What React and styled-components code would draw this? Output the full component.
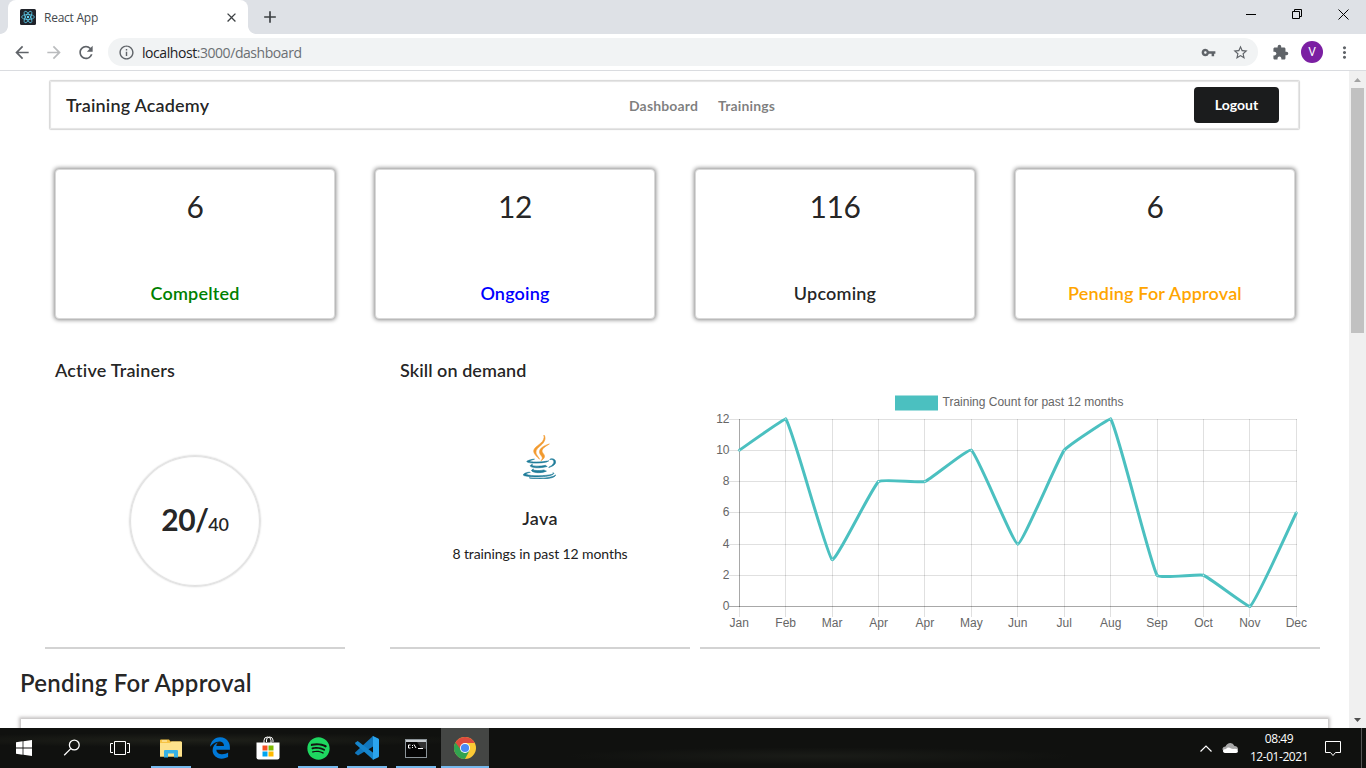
import React from "react";
import styled, { createGlobalStyle } from "styled-components";
import {
  MdArrowBack, MdArrowForward, MdRefresh, MdInfoOutline, MdVpnKey,
  MdStarBorder, MdExtension, MdMoreVert, MdClose, MdAdd,
} from "react-icons/md";
import { FaEdgeLegacy, FaSpotify } from "react-icons/fa6";

const Global = createGlobalStyle`
  * { box-sizing: border-box; }
  body { margin: 0; overflow: hidden; background: #fff; font-family: Lato, "Liberation Sans", sans-serif; font-variant-ligatures: none; color: rgba(0,0,0,.87); }
`;

const Screen = styled.div`
  width: 1366px;
  height: 768px;
  display: flex;
  flex-direction: column;
  overflow: hidden;
`;

/* ---------- browser ---------- */
const TabStrip = styled.div`
  height: 34px;
  flex: none;
  display: flex;
  background: #dee1e6;
`;
const Tab = styled.div`
  width: 240px;
  height: 34px;
  display: flex;
  align-items: center;
  padding: 0 9px 0 12px;
  background: #fff;
  border-radius: 8px 8px 0 0;
  font: 12px "Open Sans", sans-serif;
  letter-spacing: -0.25px;
  color: #45494d;
  svg { flex: none; }
`;
const TabFoot = styled.div`
  width: 8px;
  height: 8px;
  align-self: flex-end;
  background: radial-gradient(circle at ${(p) => p.$corner} 0, #dee1e6 7.5px, #fff 8.2px);
`;
const TabTitle = styled.span`
  flex: 1;
  margin-left: 8px;
`;
const NewTab = styled.div`
  display: flex;
  align-items: center;
  padding-left: 4px;
  color: #3c4043;
`;
const WindowButtons = styled.div`
  margin-left: auto;
  display: flex;
  height: 29px;
`;
const WindowButton = styled.div`
  width: 46px;
  display: flex;
  align-items: center;
  justify-content: center;
`;
const Toolbar = styled.div`
  height: 37px;
  flex: none;
  display: flex;
  align-items: center;
  padding: 0 12px 0 12px;
  background: #fff;
  border-bottom: 1px solid #dadce0;
  color: #5f6368;
`;
const ToolIcon = styled.div`
  width: 20px;
  height: 20px;
  display: flex;
  align-items: center;
  justify-content: center;
  margin-right: ${(p) => p.$gap ?? 12}px;
  color: ${(p) => p.$color || "#5f6368"};
`;
const AddressBar = styled.div`
  width: 1150px;
  height: 28px;
  display: flex;
  align-items: center;
  padding: 0 8px;
  margin-right: 12px;
  border-radius: 14px;
  background: #f1f3f4;
`;
const Url = styled.span`
  flex: 1;
  font: 14px "Open Sans", sans-serif;
  letter-spacing: -0.44px;
  color: #6b6f73;
  b { font-weight: 400; color: #202124; }
`;
const Avatar = styled.div`
  width: 22px;
  height: 22px;
  margin-right: 11px;
  display: flex;
  align-items: center;
  justify-content: center;
  border-radius: 50%;
  background: #7b1fa2;
  color: #fff;
  font: 12px Roboto, sans-serif;
`;

/* ---------- page ---------- */
const Viewport = styled.div`
  flex: 1;
  min-height: 0;
  display: flex;
`;
const Page = styled.main`
  width: 1349px;
  overflow: hidden;
  background: #fff;
`;
const ScrollTrack = styled.div`
  width: 17px;
  display: flex;
  flex-direction: column;
  align-items: center;
  justify-content: space-between;
  background: #f0f0f0;
`;
const ScrollArrow = styled.div`
  height: 17px;
  display: flex;
  align-items: center;
`;
const ScrollThumb = styled.div`
  width: 13px;
  height: 245px;
  margin-bottom: auto;
  background: #c1c1c1;
`;
const NavBar = styled.nav`
  width: 1249px;
  height: 48px;
  margin: 10px 0 0 50px;
  padding: 0 20px 0 16px;
  display: flex;
  align-items: center;
  border-radius: 1px;
  box-shadow: 0 0 1px 1px #d6d6d6, inset 0 0 1px 1px #e4e4e4;
`;
const Brand = styled.div`
  width: 563px;
  font-size: 18px;
  font-weight: 600;
  line-height: 20px;
  letter-spacing: 0.18px;
`;
const NavLinks = styled.div`
  display: flex;
  gap: 20px;
`;
const NavLink = styled.a`
  font-size: 14px;
  font-weight: 700;
  letter-spacing: 0.15px;
  color: rgba(0, 0, 0, 0.52);
`;
const LogoutButton = styled.button`
  margin-left: auto;
  width: 85px;
  height: 36px;
  border: 0;
  border-radius: 4px;
  background: #1b1c1d;
  color: #fff;
  padding: 0 0 2px;
  font: 700 14px Lato, sans-serif;
`;
const StatRow = styled.section`
  display: flex;
  gap: 40px;
  margin: 40px 0 0 55px;
`;
const StatCard = styled.article`
  width: 280px;
  height: 150px;
  padding: 16px 0 13px;
  display: flex;
  flex-direction: column;
  align-items: center;
  justify-content: space-between;
  border: 1px solid #d8d8d8;
  border-radius: 4px;
  box-shadow: 0 0 4px 0.5px rgba(0, 0, 0, 0.46);
  background: #fff;
`;
const StatValue = styled.div`
  font-size: 30px;
  line-height: 40px;
  letter-spacing: -0.4px;
`;
const StatLabel = styled.div`
  font-size: 18px;
  line-height: 24px;
  font-weight: 600;
  letter-spacing: 0.18px;
  color: ${(p) => p.$color};
`;
const PanelRow = styled.section`
  display: flex;
  margin: 30px 0 0 45px;
`;
const Panel = styled.article`
  width: ${(p) => p.$width}px;
  height: 300px;
  margin-right: ${(p) => p.$gap || 0}px;
  border-bottom: 2px solid #d3d3d3;
  display: flex;
  flex-direction: column;
  align-items: center;
`;
const PanelTitle = styled.h3`
  align-self: flex-start;
  margin: 10px 0 0 10px;
  font-size: 18px;
  line-height: 23px;
  font-weight: 600;
  letter-spacing: ${(p) => p.$spacing}px;
`;
const Ring = styled.div`
  width: 130px;
  height: 130px;
  margin-top: 74px;
  display: flex;
  align-items: baseline;
  justify-content: center;
  border-radius: 50%;
  box-shadow: 0 0 2px 0.5px #c8c8c8, inset 0 0 1px 1px #dedede;
  line-height: 126px;
  font-size: 18px;
  font-weight: 600;
  letter-spacing: -0.3px;
  b { font-size: 30px; font-weight: 700; letter-spacing: -0.6px; }
`;
const JavaLogo = styled.svg`
  width: 33px;
  height: 44px;
  margin: 53px 1px 0 0;
`;
const SkillName = styled.div`
  margin-top: 27px;
  font-size: 18px;
  line-height: 24px;
  font-weight: 600;
  letter-spacing: 0.3px;
`;
const SkillNote = styled.p`
  margin: 14px 0 0;
  font-size: 14px;
  line-height: 20px;
  letter-spacing: -0.1px;
  color: #212121;
`;
const Chart = styled.svg`
  width: 620px;
  height: 298px;
  display: block;
  text { font: 12px "Liberation Sans", Arial, sans-serif; fill: #666; }
`;
const SectionTitle = styled.h2`
  margin: 18px 0 0 20px;
  font-size: 24px;
  line-height: 31px;
  font-weight: 600;
  letter-spacing: 0.24px;
`;
const TableCard = styled.section`
  width: 1307px;
  height: 80px;
  margin: 21px 0 0 21px;
  box-shadow: 0 0 3px 2px rgba(90, 80, 80, 0.36);
  background: #fff;
`;

/* ---------- taskbar ---------- */
const Taskbar = styled.footer`
  height: 40px;
  flex: none;
  display: flex;
  background:
    radial-gradient(ellipse at 14% 30%, rgba(42, 44, 34, 0.55), transparent 18%),
    radial-gradient(ellipse at 60% 70%, rgba(36, 38, 32, 0.5), transparent 22%),
    #10110f;
`;
const TaskItem = styled.div`
  width: ${(p) => p.$width || 48}px;
  height: 40px;
  margin-right: ${(p) => p.$gap || 0}px;
  display: flex;
  align-items: center;
  justify-content: center;
  background: ${(p) => (p.$active ? "#444644" : "transparent")};
  box-shadow: ${(p) => (p.$open ? "inset 0 -2px #76b9ed" : "none")};
`;
const Tray = styled.div`
  margin-left: auto;
  display: flex;
  align-items: center;
  border-right: 1px solid #555;
  padding-right: 19px;
  margin-right: 4px;
`;
const Clock = styled.div`
  width: 62px;
  margin: 0 15px 0 0;
  text-align: center;
  color: #fff;
  font: 12px/18px "Open Sans", sans-serif;
  letter-spacing: -0.45px;
`;

const stats = [
  { value: 6, label: "Compelted", color: "green" },
  { value: 12, label: "Ongoing", color: "blue" },
  { value: 116, label: "Upcoming", color: "rgba(0,0,0,.87)" },
  { value: 6, label: "Pending For Approval", color: "orange" },
];

const months = ["Jan", "Feb", "Mar", "Apr", "Apr", "May", "Jun", "Jul", "Aug", "Sep", "Oct", "Nov", "Dec"];
const counts = [10, 12, 3, 8, 8, 10, 4, 10, 12, 2, 2, 0, 6];
const LEFT = 39.3, TOP = 70, PLOT_W = 557, PLOT_H = 187.5;
const xAt = (i) => LEFT + (i * PLOT_W) / 12;
const yAt = (v) => TOP + PLOT_H - (v * PLOT_H) / 12;
const snap = (n) => Math.floor(n) + 0.5;

function smoothPath(points, tension) {
  const clampY = (y) => Math.min(TOP + PLOT_H, Math.max(TOP, y));
  const controls = points.map((p, i) => {
    const prev = points[i - 1] || p;
    const next = points[i + 1] || p;
    const d1 = Math.hypot(p[0] - prev[0], p[1] - prev[1]);
    const d2 = Math.hypot(next[0] - p[0], next[1] - p[1]);
    const a = (tension * d1) / (d1 + d2);
    const b = (tension * d2) / (d1 + d2);
    const dx = next[0] - prev[0], dy = next[1] - prev[1];
    return [[p[0] - a * dx, clampY(p[1] - a * dy)], [p[0] + b * dx, clampY(p[1] + b * dy)]];
  });
  return points
    .map((p, i) => (i ? `C${controls[i - 1][1]} ${controls[i][0]} ${p}` : `M${p}`))
    .join(" ");
}

function TrainingChart() {
  const points = counts.map((v, i) => [xAt(i), yAt(v)]);
  return (
    <Chart viewBox="0 0 620 298">
      <rect x="195" y="46.5" width="43" height="15" fill="#4bc0c0" />
      <text x="242.5" y="57">Training Count for past 12 months</text>
      {[0, 2, 4, 6, 8, 10, 12].map((v) => (
        <g key={v}>
          <path d={`M29 ${snap(yAt(v))}H597`} stroke={v ? "rgba(0,0,0,.12)" : "rgba(0,0,0,.34)"} />
          <text x="29.5" y={yAt(v) + 3.5} textAnchor="end">{v}</text>
        </g>
      ))}
      {months.map((m, i) => (
        <g key={i}>
          <path d={`M${snap(xAt(i))} 70V${i ? 268 : 258}`} stroke={i ? "rgba(0,0,0,.12)" : "rgba(0,0,0,.34)"} />
          {!i && <path d="M39.5 258V268" stroke="rgba(0,0,0,.12)" />}
          <text x={xAt(i)} y="278" textAnchor="middle">{m}</text>
        </g>
      ))}
      <path d={smoothPath(points, 0.1)} fill="none" stroke="#4bc0c0" strokeWidth="3" strokeLinejoin="miter" />
      {points.map((p, i) => (
        <circle key={i} cx={p[0]} cy={p[1]} r="1" fill="#fff" stroke="#4bc0c0" strokeWidth="1" />
      ))}
    </Chart>
  );
}

const ReactFavicon = () => (
  <svg width="16" height="16" viewBox="0 0 16 16">
    <rect width="16" height="16" rx="1.5" fill="#20232a" />
    <g fill="none" stroke="#61dafb" strokeWidth=".7">
      <ellipse cx="8" cy="8" rx="6.4" ry="2.5" />
      <ellipse cx="8" cy="8" rx="6.4" ry="2.5" transform="rotate(60 8 8)" />
      <ellipse cx="8" cy="8" rx="6.4" ry="2.5" transform="rotate(120 8 8)" />
    </g>
    <circle cx="8" cy="8" r="1.2" fill="#61dafb" />
  </svg>
);

const Java = () => (
  <JavaLogo viewBox="0 0 384 512">
    <path fill="#f29a2e" stroke="#f29a2e" strokeWidth="7" d="M192.300 280.800c-19-42.700-83.100-80.200 0-145.800C296 53.200 242.840 0 242.840 0c21.500 84.500-75.600 110.100-110.700 162.600-23.900 35.900 11.700 74.400 60.200 118.200zm114.600-176.200c.1 0-175.200 43.800-91.500 140.200 24.700 28.400-6.500 54-6.500 54s62.700-32.400 33.900-72.900c-26.900-37.800-47.500-56.600 64.100-121.300z" />
    <path fill="#1e7c99" stroke="#1e7c99" strokeWidth="7" d="M277.740 312.900c9.800-6.700 23.400-12.500 23.400-12.500s-38.700 7-77.200 10.200c-47.100 3.900-97.700 4.700-123.100 1.300-60.100-8 33-30.100 33-30.100s-36.100-2.400-80.600 19c-52.500 25.400 130 37 224.500 12.100zm23.100 62.200a12.190 12.190 0 0 1-2 2.600c128.300-33.700 81.100-118.900 19.800-97.300a17.330 17.330 0 0 0-8.200 6.300 70.450 70.450 0 0 1 11-3c31-6.500 75.500 41.500-20.600 91.400zM348 437.400s14.500 11.900-15.900 21.200c-57.900 17.500-240.800 22.800-291.600.7-18.300-7.900 16-19 26.800-21.300 11.200-2.400 17.700-2 17.700-2-20.300-14.300-131.300 28.100-56.400 40.200C232.840 509.400 401 461.300 348 437.400zM124.440 396c-78.700 22 47.900 67.400 148.100 24.500a185.890 185.890 0 0 1-28.200-13.800c-44.700 8.500-65.400 9.100-106 4.500-33.500-3.800-13.900-15.200-13.900-15.200zm179.800 97.200c-78.700 14.800-175.800 13.100-233.300 3.600 0-.1 11.800 9.700 72.400 13.600 92.200 5.900 233.800-3.300 237.100-46.900 0 0-6.400 16.500-76.200 29.700zM260.640 353c-59.200 11.400-93.500 11.100-136.800 6.600-33.500-3.500-11.600-19.700-11.600-19.700-86.800 28.800 48.200 61.400 169.500 25.900a60.370 60.370 0 0 1-21.100-12.800z" />
  </JavaLogo>
);

const WindowsLogo = () => (
  <svg width="16" height="16" viewBox="0 0 16 16" fill="#fff">
    <path d="M0 2.200L6.600 1.300V7.500H0zM7.400 1.200L16 0V7.500H7.400zM0 8.400H6.600V14.700L0 13.800zM7.400 8.400H16V16L7.400 14.800z" />
  </svg>
);
const SearchGlyph = () => (
  <svg width="18" height="18" viewBox="0 0 18 18" fill="none" stroke="#fff" strokeWidth="1.3">
    <circle cx="11.300" cy="6" r="4.900" /><path d="M7.800 9.600L1.200 16.200" />
  </svg>
);
const TaskView = () => (
  <svg width="20" height="16" viewBox="0 0 20 16" fill="none" stroke="#fff">
    <path d="M4.500 1.500h11v13h-11zM3 3.500H.5v9H3M17 3.500h2.500v9H17" />
  </svg>
);
const Folder = () => (
  <svg width="22" height="19" viewBox="0 0 22 19">
    <path d="M0 1.500Q0 .5 1 .5H9L10.500 2.500H21Q22 2.500 22 4V17.500H0z" fill="#f6c344" />
    <path d="M0 4H10L11.500 2.500H21Q22 2.500 22 4V17.500H0z" fill="#fde28c" />
    <rect x="2" y="1.500" width="5" height="1" fill="#fff3c4" />
    <path d="M4 18.500V12Q4 11 5 11H17Q18 11 18 12V18.500H14V14.500H8V18.500z" fill="#37b1e5" />
  </svg>
);
const Store = () => (
  <svg width="24" height="24" viewBox="0 0 24 24">
    <path d="M8 7V4.500Q8 1 11.500 1T15 4.500V7M10.500 6V4Q10.500 1.200 13.500 1T17 4V6" fill="none" stroke="#fff" strokeWidth="1" />
    <path d="M.5 6.500h23v15q0 2-2 2h-19q-2 0-2-2z" fill="#fff" />
    <path d="M6.500 9.500h5v5h-5z" fill="#f25022" /><path d="M12.500 9.500h5v5h-5z" fill="#7fba00" />
    <path d="M6.500 15.500h5v5h-5z" fill="#00a4ef" /><path d="M12.500 15.500h5v5h-5z" fill="#ffb900" />
  </svg>
);
const VsCode = () => (
  <svg width="24" height="24" viewBox="0 0 24 24">
    <path d="M18 0L24 3V7L3 19.500L.3 17.500Q-.2 17 .3 16.300z" fill="#1177bd" />
    <path d="M.4 6.600L2.700 5L18.500 17V24L.4 8Q-.1 7.300.4 6.600z" fill="#1685cc" />
    <path d="M17.500 0L23 2.500Q24 3 24 4V20Q24 21 23 21.500L17.500 24Q18 23.500 18 22.500V1.500Q18 .5 17.500 0z" fill="#2ba4ee" />
  </svg>
);
const Terminal = () => (
  <svg width="22" height="19" viewBox="0 0 22 19">
    <rect x=".5" y=".5" width="21" height="18" fill="#050505" stroke="#8c9499" />
    <rect x="1" y="1" width="20" height="2" fill="#c9ced2" />
    <path d="M12 3h9v7L16 9z" fill="#333" />
    <path d="M5.500 6H3.500v3h2M7.500 6v1M7.500 8v1M9 5.500L11 9M13 9.500h5" fill="none" stroke="#fff" strokeWidth="1" />
  </svg>
);
const Chrome = () => (
  <svg width="22" height="22" viewBox="0 0 22 22">
    <circle cx="11" cy="11" r="11" fill="#fbc935" />
    <path d="M11 11L1.470 5.500A11 11 0 0 0 11 22L15.500 13.600z" fill="#32a350" />
    <path d="M11 11L1.470 5.500A11 11 0 0 1 20.530 5.500L20.700 6H11z" fill="#dd4b3e" />
    <path d="M1.470 5.500L6.700 13.500L11 11z" fill="#32a350" />
    <path d="M1.470 5.500L6.300 12L11 6V2z" fill="#dd4b3e" />
    <circle cx="11" cy="11" r="5" fill="#fff" /><circle cx="11" cy="11" r="4.100" fill="#4a8af4" />
  </svg>
);

export default function App() {
  return (
    <Screen>
      <Global />
      <TabStrip>
        <TabFoot $corner="0" />
        <Tab>
          <ReactFavicon />
          <TabTitle>React App</TabTitle>
          <MdClose size={15} color="#3c4043" />
        </Tab>
        <TabFoot $corner="100%" />
        <NewTab><MdAdd size={20} /></NewTab>
        <WindowButtons>
          <WindowButton><svg width="10" height="10"><path d="M0 4.500H10" stroke="#000" /></svg></WindowButton>
          <WindowButton>
            <svg width="11" height="11" fill="none" stroke="#000"><path d="M.5 2.500h7v7h-7zM2.500 2V.5h7v7H8" /></svg>
          </WindowButton>
          <WindowButton><svg width="11" height="11"><path d="M.5 .5L10.500 10.500M10.500 .5L.5 10.500" stroke="#000" /></svg></WindowButton>
        </WindowButtons>
      </TabStrip>
      <Toolbar>
        <ToolIcon><MdArrowBack size={21} /></ToolIcon>
        <ToolIcon $color="#babcbe"><MdArrowForward size={21} /></ToolIcon>
        <ToolIcon><MdRefresh size={21} /></ToolIcon>
        <AddressBar>
          <ToolIcon $gap={6}><MdInfoOutline size={17} /></ToolIcon>
          <Url><b>localhost</b>:3000/dashboard</Url>
          <ToolIcon><MdVpnKey size={15} /></ToolIcon>
          <ToolIcon $gap={0}><MdStarBorder size={17} /></ToolIcon>
        </AddressBar>
        <ToolIcon $gap={11}><MdExtension size={17} /></ToolIcon>
        <Avatar>V</Avatar>
        <ToolIcon $gap={0}><MdMoreVert size={19} /></ToolIcon>
      </Toolbar>
      <Viewport>
        <Page>
          <NavBar>
            <Brand>Training Academy</Brand>
            <NavLinks>
              <NavLink>Dashboard</NavLink>
              <NavLink>Trainings</NavLink>
            </NavLinks>
            <LogoutButton>Logout</LogoutButton>
          </NavBar>
          <StatRow>
            {stats.map((s) => (
              <StatCard key={s.label}>
                <StatValue>{s.value}</StatValue>
                <StatLabel $color={s.color}>{s.label}</StatLabel>
              </StatCard>
            ))}
          </StatRow>
          <PanelRow>
            <Panel $width={300} $gap={45}>
              <PanelTitle $spacing={0.18}>Active Trainers</PanelTitle>
              <Ring><b>20/</b>40</Ring>
            </Panel>
            <Panel $width={300} $gap={10}>
              <PanelTitle $spacing={0.06}>Skill on demand</PanelTitle>
              <Java />
              <SkillName>Java</SkillName>
              <SkillNote>8 trainings in past 12 months</SkillNote>
            </Panel>
            <Panel $width={620}><TrainingChart /></Panel>
          </PanelRow>
          <SectionTitle>Pending For Approval</SectionTitle>
          <TableCard />
        </Page>
        <ScrollTrack>
          <ScrollArrow><svg width="7" height="4"><path d="M0 4L3.500 0L7 4z" fill="#a3a3a3" /></svg></ScrollArrow>
          <ScrollThumb />
          <ScrollArrow><svg width="7" height="4"><path d="M0 0L3.500 4L7 0z" fill="#505050" /></svg></ScrollArrow>
        </ScrollTrack>
      </Viewport>
      <Taskbar>
        <TaskItem><WindowsLogo /></TaskItem>
        <TaskItem><SearchGlyph /></TaskItem>
        <TaskItem $gap={7}><TaskView /></TaskItem>
        <TaskItem $width={40} $gap={5} $open><Folder /></TaskItem>
        <TaskItem><FaEdgeLegacy size={22} color="#0078d7" /></TaskItem>
        <TaskItem $gap={6}><Store /></TaskItem>
        <TaskItem $width={40} $gap={9} $open><FaSpotify size={23} color="#1ed760" /></TaskItem>
        <TaskItem $width={40} $gap={9} $open><VsCode /></TaskItem>
        <TaskItem $width={40} $gap={5} $open><Terminal /></TaskItem>
        <TaskItem $active $open><Chrome /></TaskItem>
        <Tray>
          <svg width="12" height="7"><path d="M.5 6.500L6 1L11.500 6.500" fill="none" stroke="#fff" strokeWidth="1.200" /></svg>
          <svg width="36" height="12" viewBox="-10 0 36 12">
            <path d="M2 9Q0 8 .5 6.500Q1 4.500 3.500 4.500Q5 1 8.500 1Q11 1 12.500 4Q16 4 16 7.500V8z" fill="#a8a8a8" />
            <path d="M4 11Q1 11 1 9Q1 7 4 7Q6 4.500 9 6.500L11 7Q15.500 6 16 9Q16 11 14 11z" fill="#fff" />
          </svg>
          <Clock>08:49<br />12-01-2021</Clock>
          <svg width="17" height="17" fill="none" stroke="#fff"><path d="M.5 1.500h15v11h-5L8 15.500L5.500 12.500H.5z" /></svg>
        </Tray>
      </Taskbar>
    </Screen>
  );
}
